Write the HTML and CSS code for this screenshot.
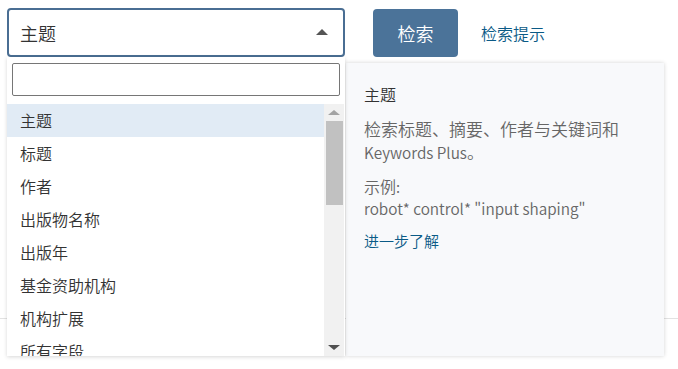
FILE: index.html
```html
<!DOCTYPE html>
<html lang="zh-CN">
<head>
<meta charset="utf-8">
<link rel="stylesheet" href="styles.css">
</head>
<body>
<div class="search-row">
  <div class="field">
    <div class="select">
      <span class="select-value">主题</span>
      <span class="caret"></span>
    </div>
    <div class="dropdown">
      <div class="dd-search"><input class="dd-input" type="text"></div>
      <div class="dd-body">
        <ul class="dd-list">
          <li class="dd-item active">主题</li>
          <li class="dd-item">标题</li>
          <li class="dd-item">作者</li>
          <li class="dd-item">出版物名称</li>
          <li class="dd-item">出版年</li>
          <li class="dd-item">基金资助机构</li>
          <li class="dd-item">机构扩展</li>
          <li class="dd-item">所有字段</li>
        </ul>
        <div class="scrollbar">
          <span class="sb-up"></span>
          <span class="sb-thumb"></span>
          <span class="sb-fill"></span>
          <span class="sb-down"></span>
        </div>
      </div>
    </div>
    <div class="help-panel">
      <div class="help-title">主题</div>
      <p class="help-desc">检索标题、摘要、作者与关键词和<br><span class="latin">Keywords Plus</span>。</p>
      <p class="help-example">示例<span class="latin">:</span><br><span class="latin">robot* control* "input shaping"</span></p>
      <a class="help-link" href="#">进一步了解</a>
    </div>
  </div>
  <button class="btn-search">检索</button>
  <a class="tips" href="#">检索提示</a>
</div>
<div class="divider"></div>
</body>
</html>
```
FILE: styles.css
```css
* { box-sizing: border-box; }
html, body { margin: 0; padding: 0; background: #fff; }
body {
  font-family: "Noto Sans CJK SC", "Noto Sans", sans-serif;
  font-weight: 350;
  color: #333;
  width: 678px;
  height: 369px;
  overflow: hidden;
}
.search-row {
  display: flex;
  align-items: flex-end;
  padding: 8px 0 0 7px;
}
.field {
  position: relative;
  width: 338px;
}
.select {
  height: 49px;
  border: 2px solid #4a6e93;
  border-radius: 4px;
  display: flex;
  align-items: center;
  justify-content: space-between;
  padding: 0 15px 0 11px;
  background: #fff;
}
.select-value {
  font-size: 18px;
  line-height: 24px;
  color: #333;
}
.caret {
  width: 0; height: 0;
  border-left: 6px solid transparent;
  border-right: 6px solid transparent;
  border-bottom: 6px solid #555;
  margin-top: -1px;
}
.dropdown {
  position: absolute;
  top: 49px;
  left: 0;
  width: 338px;
  background: #fff;
  box-shadow: 0 1px 4px rgba(0,0,0,0.16);
  z-index: 3;
}
.dd-search {
  padding: 6px 5px 8px;
}
.dd-input {
  display: block;
  width: 100%;
  height: 33px;
  border: 1px solid #767676;
  border-radius: 2px;
  margin: 0;
  outline: none;
}
.dd-body {
  display: flex;
  height: 252px;
  overflow: hidden;
}
.dd-list {
  list-style: none;
  margin: 0;
  padding: 0;
  flex: 1;
}
.dd-item {
  height: 33px;
  line-height: 33px;
  padding-left: 13px;
  font-size: 16px;
  color: #333;
}
.dd-item.active { background: #e1ebf5; }
.scrollbar {
  width: 20px;
  margin-right: 1px;
  background: #f1f1f1;
  display: flex;
  flex-direction: column;
  align-items: center;
}
.sb-up, .sb-down {
  height: 17px;
  width: 100%;
  display: flex;
  align-items: center;
  justify-content: center;
}
.sb-up::before {
  content: "";
  border-left: 6px solid transparent;
  border-right: 6px solid transparent;
  border-bottom: 5px solid #a3a3a3;
}
.sb-down::before {
  content: "";
  border-left: 6px solid transparent;
  border-right: 6px solid transparent;
  border-top: 5px solid #505050;
}
.sb-thumb {
  width: 17px;
  height: 84px;
  background: #c1c1c1;
  margin-left: 1px;
}
.sb-fill { flex: 1; }
.help-panel {
  position: absolute;
  top: 55px;
  left: 339px;
  width: 318px;
  height: 293px;
  background: #f8f9fb;
  box-shadow: 0 0 4px rgba(0,0,0,0.18);
  padding: 20px 18px;
  z-index: 2;
}
.help-title {
  font-size: 16px;
  line-height: 22px;
  color: #333;
}
.help-desc {
  margin: 12px 0 0;
  font-size: 17px;
  line-height: 23px;
  color: #666;
}
.help-example {
  margin: 12px 0 0;
  font-size: 16px;
  line-height: 22px;
  color: #666;
}
.latin { font-size: 15.3px; line-height: 1; }
.help-link {
  display: block;
  margin-top: 11px;
  font-size: 15px;
  line-height: 22px;
  color: #0a5a86;
  text-decoration: none;
}
.btn-search {
  margin-left: 28px;
  width: 85px;
  height: 48px;
  border: none;
  border-radius: 4px;
  background: #4b7399;
  color: #fff;
  font-family: inherit;
  font-weight: 350;
  font-size: 18px;
  padding: 0;
}
.tips {
  margin-left: 23px;
  align-self: center;
  font-size: 16px;
  color: #0a5a86;
  text-decoration: none;
}
.divider {
  margin-top: 261px;
  border-top: 1px solid #e2e2e2;
}
```
